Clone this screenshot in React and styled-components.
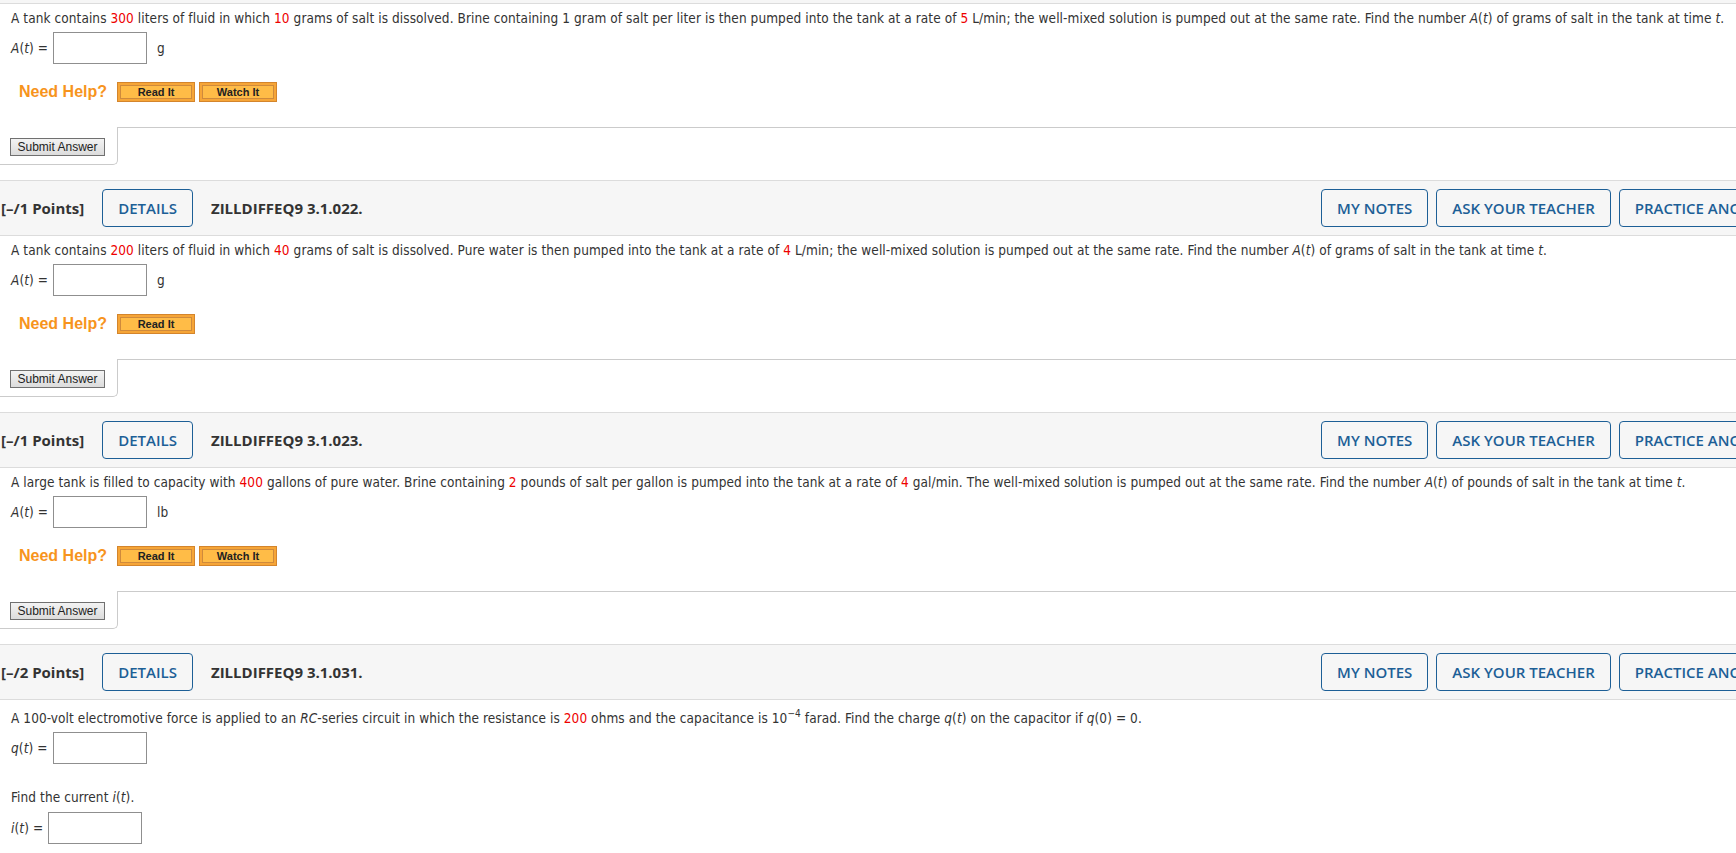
import styled, { createGlobalStyle } from 'styled-components';

const GlobalStyle = createGlobalStyle`
  html, body {
    margin: 0;
    padding: 0;
    background: #fff;
    overflow-x: hidden;
  }
`;

const Page = styled.div`
  width: 1804px;
  font-family: "DejaVu Sans Condensed", "DejaVu Sans", sans-serif;
  font-size: 13.5px;
  letter-spacing: 0.08px;
  color: #333;
`;

const HeaderTail = styled.div`
  height: 3px;
  background: #f6f6f6;
  border-bottom: 1px solid #dcdcdc;
`;

const Header = styled.div`
  display: flex;
  align-items: center;
  gap: 18px;
  height: 54px;
  padding: 0 9px 0 1px;
  margin-top: 15px;
  background: #f6f6f6;
  border-top: 1px solid #dcdcdc;
  border-bottom: 1px solid #dcdcdc;
  font-family: "Open Sans", sans-serif;
  font-size: 15px;
  letter-spacing: 0;
`;

const HeaderText = styled.span`
  font-weight: 700;
  color: #333;
`;

const HeaderActions = styled.div`
  display: flex;
  gap: 8px;
  margin-left: auto;
`;

const OutlineButton = styled.button`
  box-sizing: border-box;
  height: 38px;
  padding: 0 15px;
  background: transparent;
  border: 1px solid #1d5f96;
  border-radius: 4px;
  color: #1d5f96;
  font-family: "Open Sans", sans-serif;
  font-size: 15px;
  font-weight: 600;
  white-space: nowrap;
`;

const Body = styled.div`
  padding-left: 11px;
`;

const QText = styled.div`
  margin-top: ${p => p.$mt}px;
  line-height: 20px;
  white-space: nowrap;
`;

const Num = styled.span`
  color: #ee0000;
`;

const Var = styled.i`
  font-style: italic;
`;

const Sup = styled.sup`
  font-size: 10px;
`;

const AnswerRow = styled.div`
  display: flex;
  align-items: center;
  height: 32px;
  margin-top: ${p => p.$mt}px;
`;

const Label = styled.span`
  margin-right: 5px;
`;

const AnswerInput = styled.input`
  box-sizing: border-box;
  width: 94px;
  height: 32px;
  margin: 0;
  padding: 0 4px;
  border: 1px solid #8f8f8f;
  background: #fff;
`;

const Unit = styled.span`
  margin-left: 10px;
`;

const HelpRow = styled.div`
  display: flex;
  align-items: center;
  gap: 4px;
  height: 24px;
  margin-top: 16px;
  padding-left: 8px;
`;

const HelpLabel = styled.span`
  margin-right: 6px;
  font-family: "Liberation Sans", Arial, sans-serif;
  font-size: 16px;
  font-weight: 700;
  letter-spacing: 0;
  color: #f7941d;
`;

const HelpButton = styled.button`
  box-sizing: border-box;
  width: 78px;
  height: 20px;
  padding: 0;
  background: #ffbc47;
  border: 1px solid #d4852c;
  box-shadow: inset 0 0 0 2px #f6a537, inset 0 0 0 3px #cf8a3c;
  font-family: "Liberation Sans", Arial, sans-serif;
  font-size: 11px;
  font-weight: 700;
  letter-spacing: 0;
  color: #222;
`;

const SubmitBar = styled.div`
  display: flex;
  margin: 23px 0 0 -11px;
`;

const SubmitCell = styled.div`
  box-sizing: border-box;
  width: 118px;
  height: 38px;
  padding: 11px 0 0 10px;
  border-right: 1px solid #cbcbcb;
  border-bottom: 1px solid #cbcbcb;
  border-bottom-right-radius: 5px;
`;

const SubmitRest = styled.div`
  flex: 1;
  border-top: 1px solid #cbcbcb;
`;

const SubmitButton = styled.button`
  box-sizing: border-box;
  width: 95px;
  height: 18px;
  padding: 0;
  background: linear-gradient(#f3f3f3, #dcdcdc);
  border: 1px solid #707070;
  font-family: "Liberation Sans", Arial, sans-serif;
  font-size: 12px;
  letter-spacing: 0;
  color: #222;
`;

const At = () => (
  <>
    <Var>A</Var>(<Var>t</Var>)
  </>
);

const QuestionHeader = ({ points, code }) => (
  <Header>
    <HeaderText>[–/{points} Points]</HeaderText>
    <OutlineButton>DETAILS</OutlineButton>
    <HeaderText>{code}</HeaderText>
    <HeaderActions>
      <OutlineButton>MY NOTES</OutlineButton>
      <OutlineButton>ASK YOUR TEACHER</OutlineButton>
      <OutlineButton>PRACTICE ANOTHER</OutlineButton>
    </HeaderActions>
  </Header>
);

const Help = ({ watch }) => (
  <HelpRow>
    <HelpLabel>Need Help?</HelpLabel>
    <HelpButton>Read It</HelpButton>
    {watch && <HelpButton>Watch It</HelpButton>}
  </HelpRow>
);

const Submit = () => (
  <SubmitBar>
    <SubmitCell>
      <SubmitButton>Submit Answer</SubmitButton>
    </SubmitCell>
    <SubmitRest />
  </SubmitBar>
);

const Answer = ({ label, unit, mt = 4 }) => (
  <AnswerRow $mt={mt}>
    <Label>{label} =</Label>
    <AnswerInput type="text" />
    {unit && <Unit>{unit}</Unit>}
  </AnswerRow>
);

export default function App() {
  return (
    <Page>
      <GlobalStyle />
      <HeaderTail />
      <Body>
        <QText $mt={4}>
          A tank contains <Num>300</Num> liters of fluid in which <Num>10</Num> grams of salt is dissolved. Brine containing 1 gram of salt per liter is then pumped into the tank at a rate of <Num>5</Num> L/min; the well-mixed solution is pumped out at the same rate. Find the number <At /> of grams of salt in the tank at time <Var>t</Var>.
        </QText>
        <Answer label={<At />} unit="g" />
        <Help watch />
        <Submit />
      </Body>

      <QuestionHeader points={1} code="ZILLDIFFEQ9 3.1.022." />
      <Body>
        <QText $mt={4}>
          A tank contains <Num>200</Num> liters of fluid in which <Num>40</Num> grams of salt is dissolved. Pure water is then pumped into the tank at a rate of <Num>4</Num> L/min; the well-mixed solution is pumped out at the same rate. Find the number <At /> of grams of salt in the tank at time <Var>t</Var>.
        </QText>
        <Answer label={<At />} unit="g" />
        <Help />
        <Submit />
      </Body>

      <QuestionHeader points={1} code="ZILLDIFFEQ9 3.1.023." />
      <Body>
        <QText $mt={4}>
          A large tank is filled to capacity with <Num>400</Num> gallons of pure water. Brine containing <Num>2</Num> pounds of salt per gallon is pumped into the tank at a rate of <Num>4</Num> gal/min. The well-mixed solution is pumped out at the same rate. Find the number <At /> of pounds of salt in the tank at time <Var>t</Var>.
        </QText>
        <Answer label={<At />} unit="lb" />
        <Help watch />
        <Submit />
      </Body>

      <QuestionHeader points={2} code="ZILLDIFFEQ9 3.1.031." />
      <Body>
        <QText $mt={4}>
          A 100-volt electromotive force is applied to an <Var>RC</Var>-series circuit in which the resistance is <Num>200</Num> ohms and the capacitance is 10<Sup>−4</Sup> farad. Find the charge <Var>q</Var>(<Var>t</Var>) on the capacitor if <Var>q</Var>(0) = 0.
        </QText>
        <Answer label={<><Var>q</Var>(<Var>t</Var>)</>} />
        <QText $mt={23}>
          Find the current <Var>i</Var>(<Var>t</Var>).
        </QText>
        <Answer label={<><Var>i</Var>(<Var>t</Var>)</>} mt={5} />
      </Body>
    </Page>
  );
}
